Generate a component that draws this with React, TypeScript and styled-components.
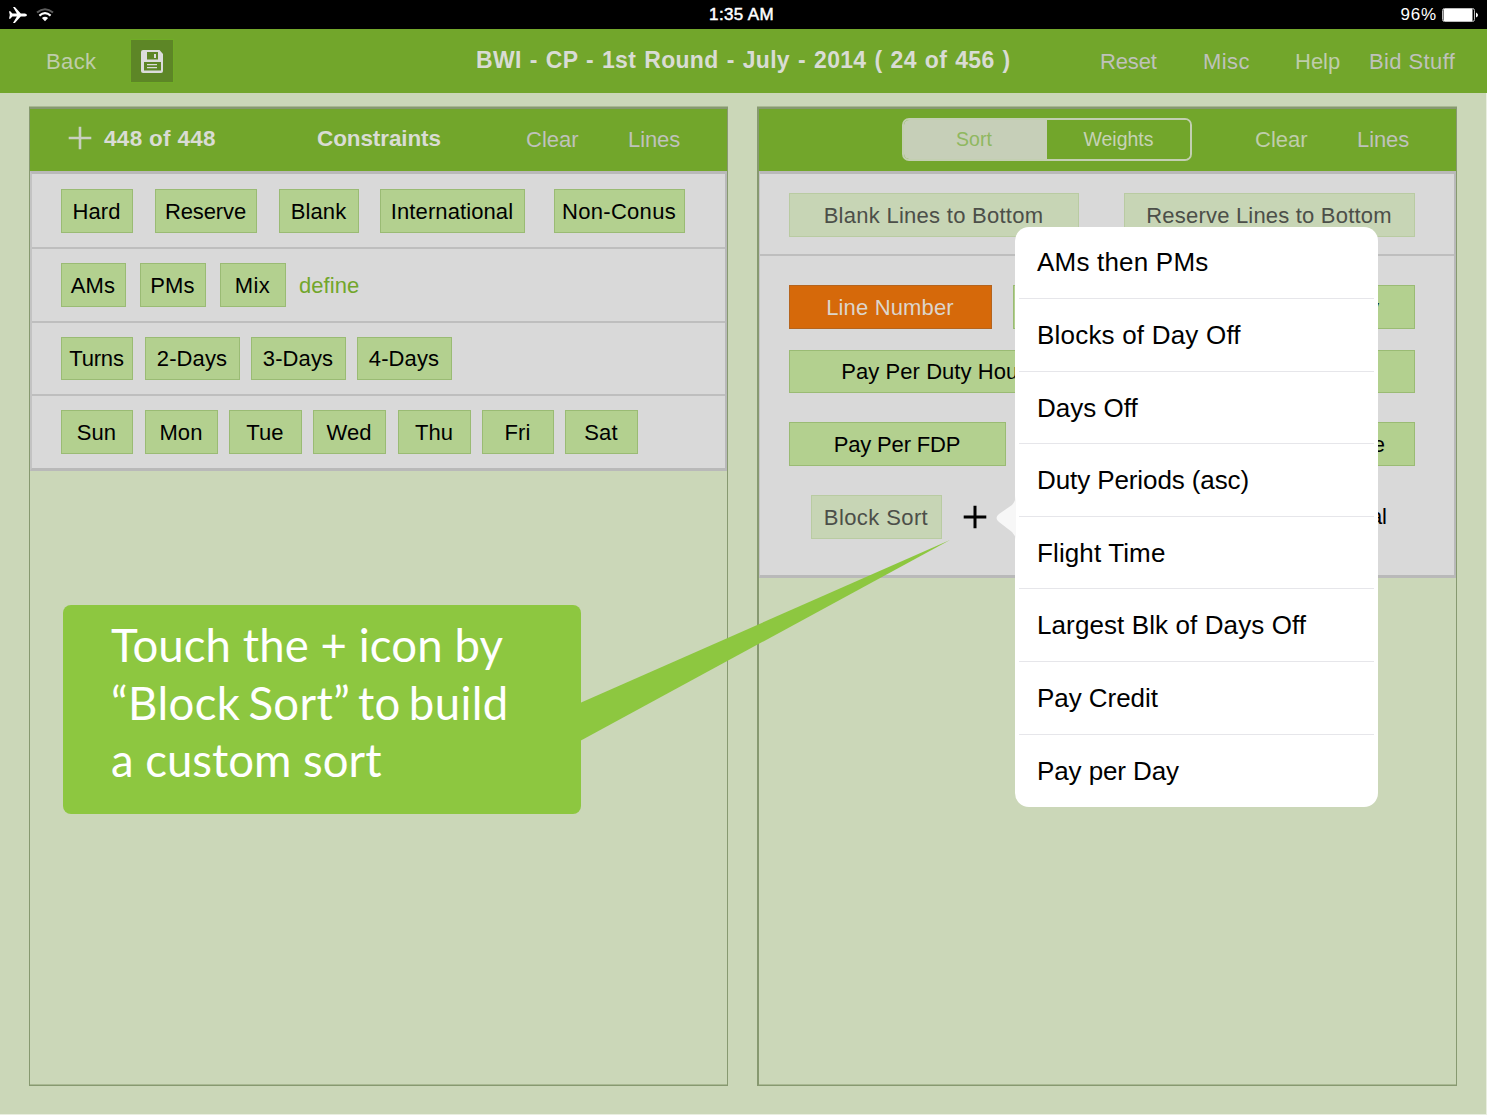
import React from 'react';
import styled, { createGlobalStyle } from 'styled-components';

const c = {
  green: '#72a62b',
  page: '#cbd7b8',
  gray: '#d9d9d9',
  line: '#b9b9b9',
  frame: '#879970',
  chip: '#b3d08f',
  chipEdge: '#9abb74',
  mutedChip: '#c7d5b5',
};

const Global = createGlobalStyle`
  * { box-sizing: border-box; }
  body { margin: 0; background: #e9eee0; font-family: "Liberation Sans", Arial, sans-serif; overflow: hidden; }
`;

const Screen = styled.div`
  position: relative;
  width: 1486px;
  height: 1114px;
  background: ${c.page};
  display: flex;
  flex-direction: column;
  font-size: 22px;
  white-space: nowrap;
`;

const StatusBar = styled.header`
  width: 1487px;
  height: 29px;
  background: #000;
  color: #fff;
  display: grid;
  grid-template-columns: 1fr auto 1fr;
  align-items: center;
  padding: 0 9px 0 8px;
  font-size: 17px;
`;
const StatusLeft = styled.div`
  display: flex;
  align-items: center;
  gap: 8px;
`;
const Clock = styled.div`
  letter-spacing: 0.35px;
  padding-right: 3px;
  -webkit-text-stroke: 0.5px #fff;
`;
const StatusRight = styled.div`
  display: flex;
  justify-content: flex-end;
  align-items: center;
  gap: 5px;
  letter-spacing: 0.8px;
`;

const NavBar = styled.nav`
  width: 1487px;
  height: 64px;
  background: ${c.green};
  display: flex;
  align-items: center;
  padding-left: 46px;
`;
const Action = styled.button<{ $w: number; $tone?: string; $track?: number; $lift?: number }>`
  all: unset;
  width: ${(p) => p.$w}px;
  padding-top: 1px;
  margin-bottom: ${(p) => p.$lift ?? 0}px;
  color: ${(p) => p.$tone ?? '#bfc2bb'};
  letter-spacing: ${(p) => p.$track ?? 0}px;
`;
const SaveButton = styled.button`
  all: unset;
  box-sizing: border-box;
  width: 44px;
  height: 44px;
  border: 1px solid #70ac26;
  background: #5d8626;
  display: grid;
  place-items: center;
`;
const Title = styled.h1`
  margin: 0 0 2px;
  width: 926px;
  padding-left: 302px;
  font-size: 23px;
  font-weight: 700;
  color: #d9dcd4;
  letter-spacing: 0.3px;
  word-spacing: 1.4px;
`;

const Main = styled.main`
  flex: 1;
  display: flex;
  gap: 29px;
  padding: 14px 29px 28px;
`;
const Panel = styled.section<{ $w: number; $left: number }>`
  width: ${(p) => p.$w}px;
  height: 979px;
  border: 1px solid ${c.frame};
  border-left-width: ${(p) => p.$left}px;
  border-top-width: 2px;
  box-shadow: inset 0 -1px 0 #a9b892, 0 -1px 0 #a9b892;
`;
const PanelHead = styled.div`
  height: 62px;
  background: ${c.green};
  display: flex;
  align-items: center;
`;
const PanelTitle = styled.h2<{ $w: number; $track: number }>`
  margin: 0 0 2px;
  width: ${(p) => p.$w}px;
  font-size: 22.5px;
  font-weight: 700;
  color: #d9dcd4;
  letter-spacing: ${(p) => p.$track}px;
`;
const AddButton = styled.button<{ $color: string; $left: number; $w: number; $lift?: number }>`
  all: unset;
  display: flex;
  margin-left: ${(p) => p.$left}px;
  margin-bottom: ${(p) => p.$lift ?? 0}px;
  width: ${(p) => p.$w}px;
  color: ${(p) => p.$color};
`;

const Body = styled.div<{ $left: number; $h: number }>`
  height: ${(p) => p.$h}px;
  background: ${c.gray};
  border: 2px solid ${c.line};
  border-top-width: 3px;
  border-bottom-width: 3px;
  border-left: ${(p) => p.$left}px solid #c3c3c3;
`;
const Row = styled.div<{ $h: number; $top?: number; $rule?: boolean }>`
  height: ${(p) => p.$h}px;
  padding: ${(p) => p.$top ?? 14}px 0 0 29px;
  display: flex;
  align-items: flex-start;
  border-bottom: ${(p) => (p.$rule === false ? '0' : '2px')} solid #bebebe;
`;
const Chip = styled.button<{ $w: number; $gap?: number; $h?: number; $kind?: 'muted' | 'active'; $track?: number; $end?: number }>`
  all: unset;
  box-sizing: border-box;
  flex: none;
  display: flex;
  align-items: center;
  justify-content: ${(p) => (p.$end ? 'flex-end' : 'center')};
  padding: ${(p) => (p.$h ? 1 : 2)}px ${(p) => p.$end ?? 1}px 0 0;
  width: ${(p) => p.$w}px;
  height: ${(p) => p.$h ?? 44}px;
  margin-left: ${(p) => p.$gap ?? 0}px;
  letter-spacing: ${(p) => p.$track ?? 0.1}px;
  color: ${(p) => (p.$kind === 'muted' ? '#4c4f49' : p.$kind === 'active' ? '#dcd5cc' : '#000')};
  background: ${(p) => (p.$kind === 'muted' ? c.mutedChip : p.$kind === 'active' ? '#d6690a' : c.chip)};
  border: 1px solid ${(p) => (p.$kind === 'muted' ? '#b9cba2' : p.$kind === 'active' ? '#b5641e' : c.chipEdge)};
`;
const DefineLink = styled.a`
  margin: 10px 0 0 13px;
  color: ${c.green};
  letter-spacing: 0.05px;
`;
const SortArea = styled.div`
  padding: 29px 0 0 29px;
`;
const SortRow = styled.div<{ $bottom?: number; $left?: number }>`
  display: flex;
  align-items: center;
  margin: 0 0 ${(p) => p.$bottom ?? 0}px ${(p) => p.$left ?? 0}px;
`;
const Mode = styled.span`
  width: 398px;
  text-align: right;
`;

const Segments = styled.div`
  display: flex;
  width: 290px;
  height: 43px;
  margin: 0 63px 2px 143px;
  border: 2px solid #c3cfb1;
  border-radius: 7px;
  overflow: hidden;
  font-size: 19.5px;
`;
const Segment = styled.button<{ $on?: boolean }>`
  all: unset;
  flex: 1;
  text-align: center;
  line-height: 35px;
  text-indent: ${(p) => (p.$on ? '-3px' : '0')};
  color: ${(p) => (p.$on ? '#8fb85f' : '#c6d2b5')};
  background: ${(p) => (p.$on ? '#c6cfb8' : c.green)};
`;

const Popover = styled.div`
  position: absolute;
  left: 1015px;
  top: 226.5px;
  width: 363px;
  height: 580px;
  background: #fff;
  border-radius: 14px;
  padding: 0 4px;
`;
const PopoverArrow = styled.svg`
  position: absolute;
  left: -20px;
  top: 269px;
`;
const Option = styled.div<{ $track: number }>`
  height: 72.6px;
  padding: 1.4px 0 0 18px;
  display: flex;
  align-items: center;
  font-size: 26px;
  letter-spacing: ${(p) => p.$track}px;
  border-bottom: 1px solid #e6e6ea;
  &:last-child { border-bottom: 0; }
`;

const Callout = styled.div`
  position: absolute;
  left: 63px;
  top: 605px;
  width: 518px;
  height: 209px;
  border-radius: 8px;
  background: #8dc740;
  padding: 11px 0 0 48px;
  color: #fff;
  font-family: Lato, "Open Sans", sans-serif;
  font-size: 45.5px;
  line-height: 57.7px;
`;
const CalloutLine = styled.div<{ $track: number; $gap?: number }>`
  letter-spacing: ${(p) => p.$track}px;
  word-spacing: ${(p) => p.$gap ?? 0}px;
`;
const Pointer = styled.svg`
  position: absolute;
  left: 517px;
  top: -66px;
`;

const Plus = ({ stroke }: { stroke: number }) => (
  <svg width="24" height="24" viewBox="0 0 24 24" fill="none" stroke="currentColor" strokeWidth={stroke}>
    <path d="M12 .7V23.3M.7 12H23.3" />
  </svg>
);
const Plane = () => (
  <svg width="20" height="18" viewBox="0 0 20 18" fill="#fff">
    <path d="M1 5.300H2.300L4.400 7.400H8.900L5 1H6.900L12.800 7.400H17Q19 8 19 9T17 10.600H12.800L6.900 17H5L8.900 10.600H4.400L2.300 12.700H1L1.800 9Z" />
  </svg>
);
const Wifi = () => (
  <svg width="18" height="14" viewBox="0 0 18 14" fill="none" strokeWidth="2.100">
    <path d="M1 4.500Q9-2 17 4.500" stroke="#5c5c5c" />
    <path d="M3.400 7.600Q9 2.800 14.600 7.600" stroke="#fff" />
    <path d="M9 13.200L5.900 10Q9 7.700 12.100 10Z" fill="#fff" />
  </svg>
);
const Battery = () => (
  <svg width="36" height="14" viewBox="0 0 36 14">
    <rect x=".5" y=".5" width="32" height="13" rx="2" fill="none" stroke="#bbb" />
    <rect x="1.500" y="1" width="29" height="12" fill="#fff" />
    <path d="M34 4.500Q36 5.500 36 7T34 9.500Z" fill="#fff" />
  </svg>
);
const Floppy = () => (
  <svg width="22" height="23" viewBox="0 0 22 23">
    <path d="M2 0H18.500L22 4V21Q22 23 20 23H2Q0 23 0 21V2Q0 0 2 0Z" fill="#dcdcdc" />
    <path d="M6 2H17V9.500H6ZM3 12H20V20.500H3Z" fill="#5d8626" />
    <path d="M13 4H15V8H13ZM6 14H16V15.200H6ZM6 17H16V18.200H6Z" fill="#dcdcdc" />
  </svg>
);

const options: [string, number][] = [
  ['AMs then PMs', 0.2], ['Blocks of Day Off', 0.2], ['Days Off', 0], ['Duty Periods (asc)', -0.1],
  ['Flight Time', 0.12], ['Largest Blk of Days Off', 0.1], ['Pay Credit', -0.05], ['Pay per Day', -0.1],
];
const weekdays: [string, number, number][] = [
  ['Sun', 72, 0], ['Mon', 73, 12], ['Tue', 73, 11], ['Wed', 73, 11], ['Thu', 73, 12], ['Fri', 72, 11], ['Sat', 73, 11],
];

export default function App() {
  return (
    <>
      <Global />
      <Screen>
        <StatusBar>
          <StatusLeft><Plane /><Wifi /></StatusLeft>
          <Clock>1:35 AM</Clock>
          <StatusRight><span>96%</span><Battery /></StatusRight>
        </StatusBar>
        <NavBar>
          <Action $w={84} $tone="#bfcdaa" $track={0.4}>Back</Action>
          <SaveButton><Floppy /></SaveButton>
          <Title>BWI - CP - 1st Round - July - 2014 ( 24 of 456 )</Title>
          <Action $w={103} $track={-0.15}>Reset</Action>
          <Action $w={92} $track={0.4}>Misc</Action>
          <Action $w={74} $tone="#bfcdaa">Help</Action>
          <Action $w={100} $track={0.4}>Bid Stuff</Action>
        </NavBar>
        <Main>
          <Panel $w={699} $left={1}>
            <PanelHead>
              <AddButton $color="#c9cfc0" $left={38} $w={36} $lift={4}><Plus stroke={2.6} /></AddButton>
              <PanelTitle $w={213} $track={0.3}>448 of 448</PanelTitle>
              <PanelTitle $w={209} $track={-0.1}>Constraints</PanelTitle>
              <Action $w={102} $lift={2}>Clear</Action>
              <Action $w={60} $track={-0.1} $lift={2}>Lines</Action>
            </PanelHead>
            <Body $left={2} $h={300}>
              <Row $h={75} $top={15}>
                <Chip $w={72}>Hard</Chip>
                <Chip $w={102} $gap={22} $track={-0.1}>Reserve</Chip>
                <Chip $w={80} $gap={22} $track={0.1}>Blank</Chip>
                <Chip $w={145} $gap={21} $track={0.1}>International</Chip>
                <Chip $w={131} $gap={29} $track={0.3}>Non-Conus</Chip>
              </Row>
              <Row $h={74}>
                <Chip $w={65}>AMs</Chip>
                <Chip $w={66} $gap={14}>PMs</Chip>
                <Chip $w={66} $gap={14} $track={0.4}>Mix</Chip>
                <DefineLink>define</DefineLink>
              </Row>
              <Row $h={73}>
                <Chip $w={72} $h={43} $track={-0.2}>Turns</Chip>
                <Chip $w={95} $h={43} $gap={12}>2-Days</Chip>
                <Chip $w={95} $h={43} $gap={11}>3-Days</Chip>
                <Chip $w={95} $h={43} $gap={11}>4-Days</Chip>
              </Row>
              <Row $h={72} $rule={false}>
                {weekdays.map(([day, w, gap]) => <Chip key={day} $w={w} $gap={gap}>{day}</Chip>)}
              </Row>
            </Body>
          </Panel>
          <Panel $w={700} $left={2}>
            <PanelHead>
              <Segments>
                <Segment $on>Sort</Segment>
                <Segment>Weights</Segment>
              </Segments>
              <Action $w={102} $tone="#bfcdaa" $lift={2}>Clear</Action>
              <Action $w={60} $track={-0.1} $lift={2}>Lines</Action>
            </PanelHead>
            <Body $left={1} $h={407}>
              <Row $h={82} $top={19}>
                <Chip $w={290} $kind="muted" $track={0.27}>Blank Lines to Bottom</Chip>
                <Chip $w={291} $gap={45} $kind="muted" $track={0.2}>Reserve Lines to Bottom</Chip>
              </Row>
              <SortArea>
                <SortRow $bottom={21}>
                  <Chip $w={203} $kind="active" $track={0.15}>Line Number</Chip>
                  <Chip $w={402} $gap={21} $end={35}>Pay Per Day</Chip>
                </SortRow>
                <SortRow $bottom={29}>
                  <Chip $w={290} $h={43} $track={0.05}>Pay Per Duty Hour</Chip>
                  <Chip $w={291} $h={43} $gap={45} />
                </SortRow>
                <SortRow $bottom={29}>
                  <Chip $w={217} $track={-0.15}>Pay Per FDP</Chip>
                  <Chip $w={364} $gap={45} $end={29}>Time Away From Base</Chip>
                </SortRow>
                <SortRow $left={22}>
                  <Chip $w={131} $kind="muted" $track={0.4}>Block Sort</Chip>
                  <AddButton $color="#000" $left={21} $w={26}><Plus stroke={3} /></AddButton>
                  <Mode>Manual</Mode>
                </SortRow>
              </SortArea>
            </Body>
          </Panel>
        </Main>
        <Popover>
          <PopoverArrow width="21" height="44" viewBox="0 0 21 44">
            <path d="M21 0Q20 6 17 9L4 18Q-1 22 4 26L17 36Q20 39 21 44Z" fill="#f7f7f7" />
          </PopoverArrow>
          {options.map(([label, track]) => <Option key={label} $track={track}>{label}</Option>)}
        </Popover>
        <Callout>
          <Pointer width="372" height="204" viewBox="0 0 372 204">
            <path d="M0 164L370 1L0 202Z" fill="#8dc740" />
          </Pointer>
          <CalloutLine $track={0.1}>Touch the + icon by</CalloutLine>
          <CalloutLine $track={0.4} $gap={-4}>“Block Sort” to build</CalloutLine>
          <CalloutLine $track={0}>a custom sort</CalloutLine>
        </Callout>
      </Screen>
    </>
  );
}
